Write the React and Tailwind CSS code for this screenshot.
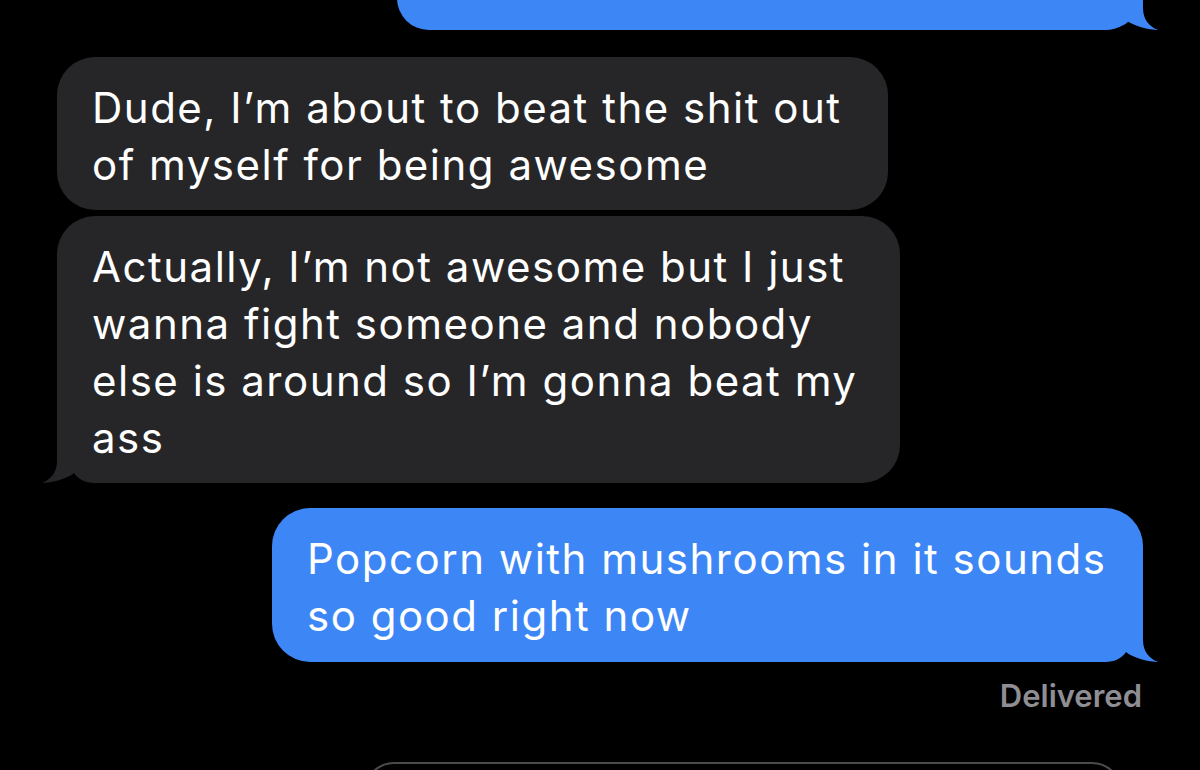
import React from "react";

const FONT = { fontFamily: 'Inter, "Liberation Sans", Arial, sans-serif' };

// Bubble tail: a flared corner with a small notch, drawn at the bottom-right.
function Tail({ color, side }) {
  const pos =
    side === "right"
      ? "absolute right-[-16px] bottom-0"
      : "absolute left-[-16px] bottom-0 -scale-x-100";
  return (
    <svg className={pos} width="64" height="48" viewBox="0 0 64 48">
      <path
        d="M48 0 L48 26 C48 37 54 45 63.5 48 C54 48 38 44 31 38 C27 44 20 48 10 48 L0 48 L0 0 Z"
        fill={color}
      />
    </svg>
  );
}

function Lines({ lines }) {
  return (
    <div className="relative">
      {lines.map((l, i) => (
        <div key={i} className="whitespace-nowrap">
          {l}
        </div>
      ))}
    </div>
  );
}

export default function App() {
  return (
    <div
      className="w-[1200px] h-[770px] bg-black overflow-hidden flex flex-col text-white"
      style={FONT}
    >
      {/* previous outgoing message, scrolled mostly out of view */}
      <div className="shrink-0 self-end mr-[57px] mt-[-40px] relative w-[746px] h-[70px] bg-[#3d86f5] rounded-[40px] rounded-br-[48px]">
        <Tail color="#3d86f5" side="right" />
      </div>

      {/* incoming */}
      <div className="shrink-0 ml-[57px] mt-[27px] w-[831px] h-[153px] bg-[#262628] rounded-[38px] pl-[35px] pt-[22px] text-[42px] leading-[57px] tracking-[1.5px]">
        <Lines
          lines={[
            "Dude, I\u2019m about to beat the shit out",
            "of myself for being awesome",
          ]}
        />
      </div>
      <div className="shrink-0 relative ml-[57px] mt-[6px] w-[843px] h-[267px] bg-[#262628] rounded-[38px] rounded-bl-[48px] pl-[35px] pt-[22px] text-[42px] leading-[57px] tracking-[1.5px]">
        <Tail color="#262628" side="left" />
        <Lines
          lines={[
            "Actually, I\u2019m not awesome but I just",
            "wanna fight someone and nobody",
            "else is around so I\u2019m gonna beat my",
            "ass",
          ]}
        />
      </div>

      {/* outgoing */}
      <div className="shrink-0 relative self-end mr-[57px] mt-[25px] w-[871px] h-[154px] bg-[#3d86f5] rounded-[38px] rounded-br-[48px] pl-[35px] pt-[22px] text-[42px] leading-[57px] tracking-[1.5px]">
        <Tail color="#3d86f5" side="right" />
        <Lines
          lines={["Popcorn with mushrooms in it sounds", "so good right now"]}
        />
      </div>

      <div className="shrink-0 self-end mr-[58px] mt-[16px] text-[31px] leading-[36px] font-semibold text-[#8e8e93]">
        Delivered
      </div>

      {/* message input field */}
      <div className="ml-[364px] mt-[48px] w-[758px] h-[60px] shrink-0 border-2 border-[#4a4a4d] rounded-[30px]" />
    </div>
  );
}
